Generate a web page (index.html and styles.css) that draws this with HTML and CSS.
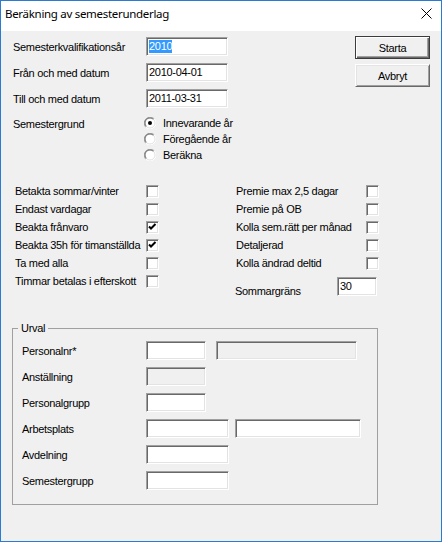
FILE: index.html
```html
<!DOCTYPE html>
<html lang="sv">
<head>
<meta charset="utf-8">
<title>Beräkning av semesterunderlag</title>
<link rel="stylesheet" href="styles.css">
</head>
<body>
<div class="window">
  <div class="titlebar">
    <span class="title">Beräkning av semesterunderlag</span>
    <svg class="close" width="11" height="11" viewBox="0 0 11 11"><path d="M0.5 0.5 L10.5 10.5 M10.5 0.5 L0.5 10.5" stroke="#000" stroke-width="1" fill="none"/></svg>
  </div>
  <div class="client">
    <div class="top">
      <div class="form">
        <span>Semesterkvalifikationsår</span>
        <div class="field"><span class="sel">2010</span></div>
        <span>Från och med datum</span>
        <div class="field">2010-04-01</div>
        <span>Till och med datum</span>
        <div class="field">2011-03-31</div>
      </div>
      <div class="buttons">
        <button class="btn default">Starta</button>
        <button class="btn">Avbryt</button>
      </div>
    </div>

    <div class="grund">
      <span class="grund-label">Semestergrund</span>
      <div class="radios">
        <div class="radio-row">
          <svg class="radio" width="12" height="12" viewBox="0 0 12 12"><circle cx="6" cy="6" r="5" fill="#fff"/><path d="M1.76 10.24 A6 6 0 0 1 10.24 1.76" stroke="#a0a0a0" fill="none"/><path d="M2.46 9.54 A5 5 0 0 1 9.54 2.46" stroke="#696969" fill="none"/><path d="M10.24 1.76 A6 6 0 0 1 1.76 10.24" stroke="#fff" fill="none"/><path d="M9.54 2.46 A5 5 0 0 1 2.46 9.54" stroke="#e3e3e3" fill="none"/><circle cx="6" cy="6" r="2" fill="#000"/></svg>
          <span>Innevarande år</span>
        </div>
        <div class="radio-row">
          <svg class="radio" width="12" height="12" viewBox="0 0 12 12"><circle cx="6" cy="6" r="5" fill="#fff"/><path d="M1.76 10.24 A6 6 0 0 1 10.24 1.76" stroke="#a0a0a0" fill="none"/><path d="M2.46 9.54 A5 5 0 0 1 9.54 2.46" stroke="#696969" fill="none"/><path d="M10.24 1.76 A6 6 0 0 1 1.76 10.24" stroke="#fff" fill="none"/><path d="M9.54 2.46 A5 5 0 0 1 2.46 9.54" stroke="#e3e3e3" fill="none"/></svg>
          <span>Föregående år</span>
        </div>
        <div class="radio-row">
          <svg class="radio" width="12" height="12" viewBox="0 0 12 12"><circle cx="6" cy="6" r="5" fill="#fff"/><path d="M1.76 10.24 A6 6 0 0 1 10.24 1.76" stroke="#a0a0a0" fill="none"/><path d="M2.46 9.54 A5 5 0 0 1 9.54 2.46" stroke="#696969" fill="none"/><path d="M10.24 1.76 A6 6 0 0 1 1.76 10.24" stroke="#fff" fill="none"/><path d="M9.54 2.46 A5 5 0 0 1 2.46 9.54" stroke="#e3e3e3" fill="none"/></svg>
          <span>Beräkna</span>
        </div>
      </div>
    </div>

    <div class="checks">
      <div class="col-left">
        <span>Betakta sommar/vinter</span><span class="cb"></span>
        <span>Endast vardagar</span><span class="cb"></span>
        <span>Beakta frånvaro</span><span class="cb"><svg width="11" height="11" viewBox="0 0 11 11"><path d="M2 4.5 L4 6.5 L8.5 2" stroke="#000" stroke-width="2" fill="none"/></svg></span>
        <span>Beakta 35h för timanställda</span><span class="cb"><svg width="11" height="11" viewBox="0 0 11 11"><path d="M2 4.5 L4 6.5 L8.5 2" stroke="#000" stroke-width="2" fill="none"/></svg></span>
        <span>Ta med alla</span><span class="cb"></span>
        <span>Timmar betalas i efterskott</span><span class="cb"></span>
      </div>
      <div class="col-right">
        <div class="col-right-grid">
          <span>Premie max 2,5 dagar</span><span class="cb"></span>
          <span>Premie på OB</span><span class="cb"></span>
          <span>Kolla sem.rätt per månad</span><span class="cb"></span>
          <span>Detaljerad</span><span class="cb"></span>
          <span>Kolla ändrad deltid</span><span class="cb"></span>
        </div>
        <div class="sommar">
          <span class="sommar-label">Sommargräns</span>
          <div class="field w40">30</div>
        </div>
      </div>
    </div>

    <fieldset class="urval">
      <legend>Urval</legend>
      <div class="urval-grid">
        <span>Personalnr*</span>
        <div class="pair gap10"><div class="field w60"></div><div class="field disabled w141"></div></div>
        <span>Anställning</span>
        <div class="pair"><div class="field disabled w60"></div></div>
        <span>Personalgrupp</span>
        <div class="pair"><div class="field w60"></div></div>
        <span>Arbetsplats</span>
        <div class="pair gap6"><div class="field w83"></div><div class="field w126"></div></div>
        <span>Avdelning</span>
        <div class="pair"><div class="field w83"></div></div>
        <span>Semestergrupp</span>
        <div class="pair"><div class="field w83"></div></div>
      </div>
    </fieldset>
  </div>
</div>
</body>
</html>
```
FILE: styles.css
```css
* { box-sizing: border-box; }
html, body { margin: 0; padding: 0; }
body {
  font-family: "Liberation Sans", Arial, sans-serif;
  font-size: 11px;
  letter-spacing: -0.3px;
  color: #000;
  background: #f0f0f0;
}
.window {
  width: 442px;
  height: 542px;
  border: 1px solid #2b7bd0;
  display: flex;
  flex-direction: column;
  background: #f0f0f0;
}
.titlebar {
  height: 30px;
  flex: none;
  background: #fff;
  display: flex;
  align-items: flex-start;
  justify-content: space-between;
  padding: 0 9px 0 4px;
}
.title {
  font-family: "Noto Sans", "Open Sans", sans-serif;
  font-size: 11.5px;
  letter-spacing: -0.3px;
  line-height: 16px;
  padding-top: 5px;
}
.close { margin-top: 7px; }
.client {
  flex: 1;
  padding: 5px 11px 0 12px;
}
.top {
  display: flex;
  justify-content: space-between;
}
.form {
  display: grid;
  grid-template-columns: 133px 82px;
  grid-auto-rows: 19px;
  row-gap: 7px;
  align-items: center;
  padding-top: 1px;
}
.buttons {
  display: flex;
  flex-direction: column;
  gap: 5px;
  width: 75px;
}
.btn {
  height: 23px;
  font: inherit;
  letter-spacing: inherit;
  color: #000;
  background: #f0f0f0;
  border: 1px solid;
  border-color: #fff #696969 #696969 #fff;
  box-shadow: inset 1px 1px #e3e3e3, inset -1px -1px #a0a0a0;
  padding: 0;
}
.btn.default {
  border-color: #3c3c3c;
  box-shadow: inset 1px 1px #fff, inset -1px -1px #696969, inset -2px -2px #a0a0a0;
}
.field {
  height: 19px;
  background: #fff;
  border: 1px solid;
  border-color: #a0a0a0 #fff #fff #a0a0a0;
  box-shadow: inset 1px 1px #696969, inset -1px -1px #e3e3e3;
  padding: 0 0 0 2px;
  line-height: 17px;
  display: flex;
  align-items: center;
}
.field.disabled { background: #f0f0f0; }
.sel {
  background: #3399ff;
  color: #fff;
  line-height: 13px;
}
.grund {
  display: grid;
  grid-template-columns: 131px auto;
  margin-top: 7px;
}
.grund-label { padding-top: 3px; line-height: 13px; }
.radios { display: flex; flex-direction: column; }
.radio-row {
  height: 16px;
  display: flex;
  align-items: center;
  gap: 7px;
}
.radio { flex: none; }
.checks {
  display: flex;
  margin-top: 19px;
  padding-left: 2px;
}
.col-left {
  width: 221px;
  display: grid;
  grid-template-columns: 131px 13px;
  grid-auto-rows: 18px;
  align-items: center;
  align-content: start;
}
.col-right { display: flex; flex-direction: column; }
.col-right-grid {
  display: grid;
  grid-template-columns: 130px 13px;
  grid-auto-rows: 18px;
  align-items: center;
}
.cb {
  width: 13px;
  height: 13px;
  background: #fff;
  border: 1px solid;
  border-color: #a0a0a0 #fff #fff #a0a0a0;
  box-shadow: inset 1px 1px #696969, inset -1px -1px #e3e3e3;
  display: block;
}
.cb svg { display: block; }
.sommar {
  display: flex;
  margin-top: 5px;
  margin-left: -1px;
}
.sommar-label {
  width: 102px;
  align-self: flex-end;
  line-height: 13px;
  margin-bottom: -2px;
}
.w40 { width: 40px; }
.w60 { width: 60px; }
.w83 { width: 83px; }
.w126 { width: 126px; }
.w141 { width: 141px; }
.urval {
  margin: 25px 0 0 -1px;
  width: 366px;
  min-inline-size: 0;
  border: 1px solid #a0a0a0;
  padding: 6px 0 14px 9px;
}
.urval legend {
  line-height: 14px;
  padding: 0 3px;
  margin-left: -4px;
}
.urval-grid {
  display: grid;
  grid-template-columns: 124px auto;
  grid-auto-rows: 19px;
  row-gap: 7px;
  align-items: center;
}
.pair { display: flex; }
.gap10 { gap: 10px; }
.gap6 { gap: 6px; }
```
